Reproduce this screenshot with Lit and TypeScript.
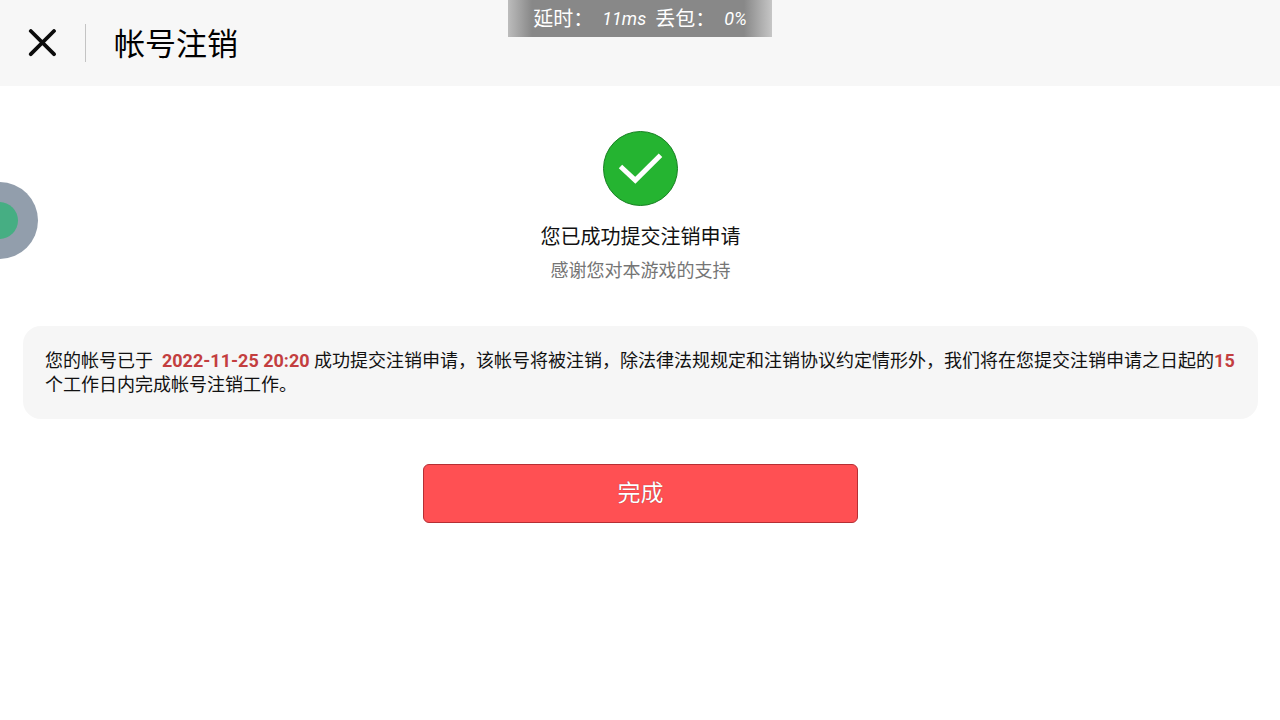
import { LitElement, html, css } from "lit";
import { customElement, property } from "lit/decorators.js";

@customElement("network-status")
class NetworkStatus extends LitElement {
  @property({ type: Number }) latency = 11;
  @property({ type: Number }) loss = 0;

  static styles = css`
    :host {
      display: flex;
      justify-content: center;
      gap: 9px;
      box-sizing: border-box;
      height: 37px;
      padding: 0 24px;
      background: linear-gradient(90deg, #bcbcbc, #888 24px, #888 calc(100% - 28px), #c6c6c6);
      color: #fff;
      font-size: 20px;
      line-height: 38px;
      white-space: nowrap;
    }
    .value {
      font-size: 18px;
      font-style: italic;
    }
  `;

  render() {
    return html`<span>延时：</span><span class="value">${this.latency}ms</span
      ><span>丢包：</span><span class="value">${this.loss}%</span>`;
  }
}

@customElement("app-root")
class AppRoot extends LitElement {
  static styles = css`
    :host {
      display: block;
      position: relative;
      min-height: 100vh;
      overflow: hidden;
      background: #fff;
      color: #111;
      font-family: Roboto, "Noto Sans CJK SC", sans-serif;
    }
    .header {
      display: flex;
      align-items: center;
      box-sizing: border-box;
      height: 86px;
      padding: 0 28px;
      background: #f7f7f7;
    }
    .close {
      display: flex;
      padding: 0;
      border: 0;
      background: none;
      cursor: pointer;
    }
    .divider {
      width: 1px;
      height: 38px;
      margin: 0 28px;
      background: #c4c4c4;
    }
    .title {
      margin: 0;
      padding-top: 4px;
      color: #000;
      font-size: 31px;
      font-weight: 400;
      line-height: 44px;
    }
    .status {
      position: absolute;
      top: 0;
      left: 50%;
      width: 264px;
      transform: translateX(-50%);
    }
    .assist {
      position: absolute;
      top: 182px;
      left: -39px;
      display: flex;
      align-items: center;
      justify-content: center;
      width: 77px;
      height: 77px;
      padding: 0;
      border: 0;
      border-radius: 50%;
      background: #929eac;
    }
    .assist-dot {
      width: 37px;
      height: 37px;
      border-radius: 50%;
      background: #46ae83;
    }
    .content {
      display: flex;
      flex-direction: column;
      align-items: center;
      padding: 44px 22px 44px 23px;
    }
    .headline {
      margin: 15px 0 0;
      font-size: 20px;
      font-weight: 400;
      line-height: 30px;
    }
    .thanks {
      margin: 6px 0 0;
      color: #757575;
      font-size: 18px;
      line-height: 26px;
    }
    .notice {
      align-self: stretch;
      margin: 42px 0 0;
      padding: 23px 22px 22px;
      border-radius: 18px;
      background: #f6f6f6;
      font-size: 18px;
      line-height: 24px;
    }
    .mark {
      color: #c33e3f;
      font-weight: 700;
    }
    .done {
      box-sizing: border-box;
      width: 34vw;
      height: 59px;
      margin-top: 45px;
      padding: 0 0 6px;
      border: 1px solid #b52f34;
      border-radius: 6px;
      background: #ff5053;
      color: #fff;
      font: inherit;
      font-size: 23px;
      text-shadow: 0 0 1px #8e2a2d;
      cursor: pointer;
    }
  `;

  render() {
    return html`
      <header class="header">
        <button class="close" aria-label="关闭">
          <svg width="29" height="29" viewBox="0 0 29 29" fill="none" stroke="#0c0c0c" stroke-width="3.8" stroke-linecap="round">
            <path d="M2.8 2 26 25.2M26 2 2.8 25.2" />
          </svg>
        </button>
        <span class="divider"></span>
        <h1 class="title">帐号注销</h1>
      </header>
      <network-status class="status" .latency=${11} .loss=${0}></network-status>
      <main class="content">
        <svg width="77" height="77" viewBox="0 0 77 77" aria-hidden="true">
          <circle cx="38.5" cy="38.5" r="37" fill="#25b431" stroke="#178022" />
          <path d="M18.5 36.5 33.3 50.3 58.5 25.2" fill="none" stroke="#fff" stroke-width="5" />
        </svg>
        <h2 class="headline">您已成功提交注销申请</h2>
        <p class="thanks">感谢您对本游戏的支持</p>
        <p class="notice">您的帐号已于&nbsp; <time class="mark" datetime="2022-11-25T20:20">2022-11-25 20:20</time> 成功提交注销申请，该帐号将被注销，除法律法规规定和注销协议约定情形外，我们将在您提交注销申请之日起的<span class="mark">15</span>个工作日内完成帐号注销工作。</p>
        <button class="done">完成</button>
      </main>
      <button class="assist" aria-label="悬浮助手"><span class="assist-dot"></span></button>
    `;
  }
}
